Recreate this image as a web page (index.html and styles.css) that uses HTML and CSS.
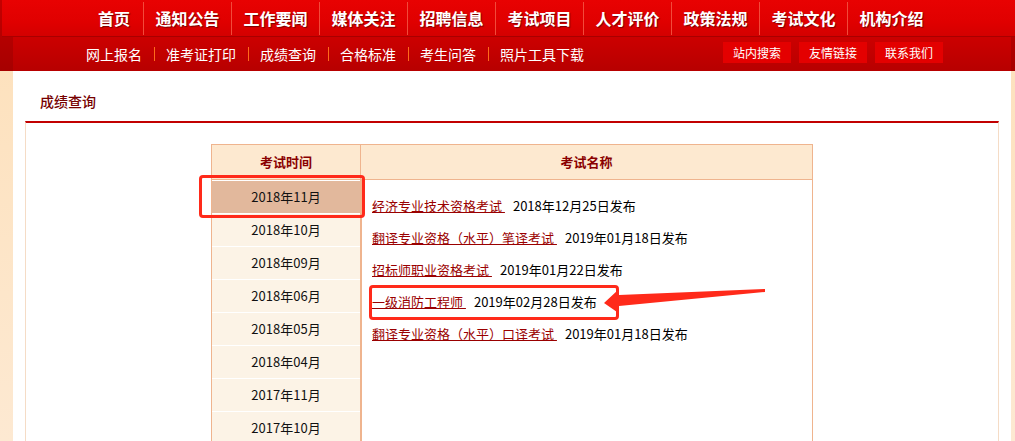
FILE: index.html
```html
<!DOCTYPE html>
<html lang="zh-CN">
<head>
<meta charset="utf-8">
<title>成绩查询</title>
<link rel="stylesheet" href="styles.css">
</head>
<body>
<div class="page">
  <header class="header">
    <nav class="topnav">
      <ul class="topnav-list">
        <li class="topnav-item first">首页</li>
        <li class="topnav-item">通知公告</li>
        <li class="topnav-item">工作要闻</li>
        <li class="topnav-item">媒体关注</li>
        <li class="topnav-item">招聘信息</li>
        <li class="topnav-item">考试项目</li>
        <li class="topnav-item">人才评价</li>
        <li class="topnav-item">政策法规</li>
        <li class="topnav-item">考试文化</li>
        <li class="topnav-item">机构介绍</li>
      </ul>
    </nav>
    <div class="subnav">
      <ul class="sublinks">
        <li class="sublink">网上报名</li>
        <li class="sublink">准考证打印</li>
        <li class="sublink">成绩查询</li>
        <li class="sublink">合格标准</li>
        <li class="sublink">考生问答</li>
        <li class="sublink">照片工具下载</li>
      </ul>
      <div class="tools">
        <span class="tool-btn">站内搜索</span>
        <span class="tool-btn">友情链接</span>
        <span class="tool-btn">联系我们</span>
      </div>
    </div>
  </header>

  <main class="main">
    <h2 class="title">成绩查询</h2>
    <div class="panel">
      <div class="score">
        <div class="score-head">
          <div class="th th-time">考试时间</div>
          <div class="th th-name">考试名称</div>
        </div>
        <div class="score-body">
          <ul class="months">
            <li class="month active">2018年11月</li>
            <li class="month">2018年10月</li>
            <li class="month">2018年09月</li>
            <li class="month">2018年06月</li>
            <li class="month">2018年05月</li>
            <li class="month">2018年04月</li>
            <li class="month">2017年11月</li>
            <li class="month">2017年10月</li>
          </ul>
          <ul class="exams">
            <li class="exam"><a class="exam-link" href="#">经济专业技术资格考试 </a><span class="exam-date">2018年12月25日发布</span></li>
            <li class="exam"><a class="exam-link" href="#">翻译专业资格（水平）笔译考试 </a><span class="exam-date">2019年01月18日发布</span></li>
            <li class="exam"><a class="exam-link" href="#">招标师职业资格考试 </a><span class="exam-date">2019年01月22日发布</span></li>
            <li class="exam"><a class="exam-link" href="#">一级消防工程师 </a><span class="exam-date">2019年02月28日发布</span></li>
            <li class="exam"><a class="exam-link" href="#">翻译专业资格（水平）口译考试 </a><span class="exam-date">2019年01月18日发布</span></li>
          </ul>
        </div>
        <div class="mark mark-month"></div>
        <div class="mark mark-exam"></div>
        <svg class="arrow" width="165" height="30" viewBox="0 0 165 30">
          <polygon points="2,18 16,5 17,10 163,4 163,7 17,21 15,27" fill="#ff2a1a"/>
        </svg>
      </div>
    </div>
  </main>
</div>
</body>
</html>
```

FILE: styles.css
```css
* {
  box-sizing: border-box;
}

html, body {
  margin: 0;
  padding: 0;
}

body {
  width: 1015px;
  height: 441px;
  overflow: hidden;
  font-family: "Noto Sans CJK SC", "Liberation Sans", sans-serif;
  background: linear-gradient(180deg, #fde0ba 0%, #fde9d2 100%);
}

ul {
  list-style: none;
  margin: 0;
  padding: 0;
}

.page {
  display: flex;
  flex-direction: column;
  height: 441px;
}

/* ---------- header ---------- */
.header {
  background: linear-gradient(180deg, #c40000 0%, #a60000 100%);
  height: 71px;
  flex: none;
}

.topnav {
  margin-left: 2px;
  height: 37px;
  background: linear-gradient(180deg, #e80202 0%, #e00000 60%, #d40000 100%);
  border-bottom: 1px solid #a80000;
}

.topnav-list {
  display: flex;
  padding-left: 83px;
  height: 36px;
  align-items: center;
}

.topnav-item {
  width: 88px;
  height: 33px;
  line-height: 33px;
  text-align: center;
  color: #fff;
  font-size: 16px;
  font-weight: bold;
  text-shadow: 1px 1px 1px #7a0000;
  border-left: 1px solid #f24a3a;
}

.topnav-item.first {
  width: 58px;
  border-left: none;
}

.subnav {
  margin: 0 4px 0 13px;
  height: 34px;
  background: linear-gradient(180deg, #cc0000 0%, #b70000 100%);
  display: flex;
  justify-content: space-between;
}

.sublinks {
  display: flex;
  align-items: center;
  padding-left: 73px;
}

.sublink {
  color: #fff;
  font-size: 14px;
  display: flex;
  align-items: center;
}

.sublink + .sublink::before {
  content: "";
  display: block;
  width: 1px;
  height: 14px;
  background: #ff6a1a;
  margin: 0 11px 0 12px;
}

.tools {
  display: flex;
  gap: 8px;
  margin: 5px 68px 0 0;
}

.tool-btn {
  width: 68px;
  height: 21px;
  line-height: 21px;
  background: #e40000;
  color: #fff;
  font-size: 12px;
  text-align: center;
}

/* ---------- main ---------- */
.main {
  flex: 1;
  margin: 0 4px 0 13px;
  background: #fff;
  display: flex;
  flex-direction: column;
}

.title {
  margin: 0;
  height: 50px;
  padding: 20px 0 0 27px;
  line-height: 20px;
  font-size: 14px;
  font-weight: 500;
  color: #760000;
}

.panel {
  flex: 1;
  margin: 0 12px;
  border-top: 2px solid #c20000;
  border-left: 1px solid #f5dcc6;
  border-right: 1px solid #f5dcc6;
  padding-top: 21px;
}

.score {
  position: relative;
  width: 602px;
  margin: 0 auto;
  border: 1px solid #efb48e;
  border-bottom: none;
}

.score-head {
  display: flex;
  height: 35px;
  background: #fde9d0;
  border-bottom: 1px solid #efb48e;
}

.th {
  font-size: 13px;
  font-weight: bold;
  color: #8a0000;
  text-align: center;
  line-height: 34px;
}

.th-time {
  width: 149px;
  border-right: 1px solid #efb48e;
}

.th-name {
  flex: 1;
}

.score-body {
  display: flex;
}

.months {
  width: 150px;
  background: #fcf3e6;
  border-right: 2px solid #efb48e;
}

.month {
  height: 33px;
  border-top: 1px solid #fff;
  line-height: 32px;
  text-align: center;
  font-size: 13px;
  color: #111;
}

.month.active {
  background: #e2b89c;
}

.exams {
  flex: 1;
  padding: 10px 0 0 10px;
}

.exam {
  line-height: 32px;
  font-size: 13px;
  color: #000;
  white-space: nowrap;
}

.exam-link {
  color: #9a0000;
  text-decoration: underline;
  white-space: pre;
}

.exam-date {
  margin-left: 8px;
}

/* ---------- annotations ---------- */
.mark {
  position: absolute;
  border: 3px solid #ff2a1a;
  border-radius: 4px;
}

.mark-month {
  left: -13px;
  top: 30px;
  width: 166px;
  height: 43px;
}

.mark-exam {
  left: 157px;
  top: 140px;
  width: 250px;
  height: 35px;
}

.arrow {
  position: absolute;
  left: 390px;
  top: 140px;
}
```
